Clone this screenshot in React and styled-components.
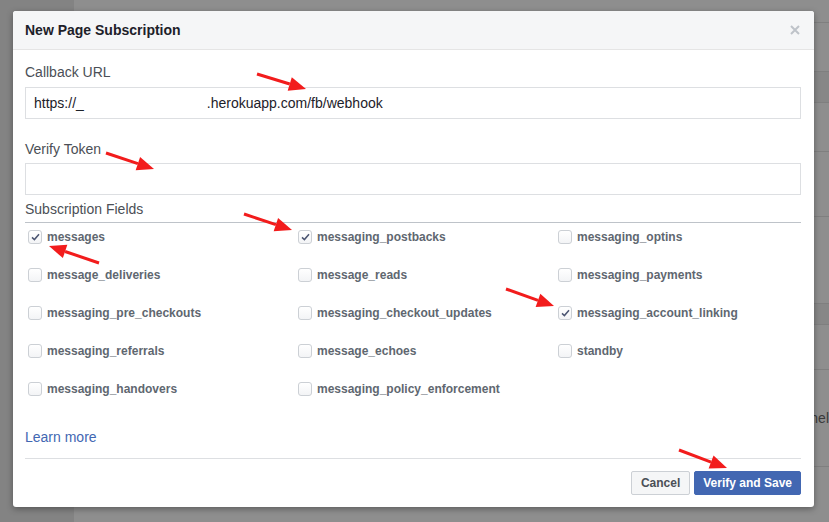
import React from 'react'
import styled, { createGlobalStyle } from 'styled-components'

const GlobalStyle = createGlobalStyle`
  html, body {
    margin: 0;
    padding: 0;
    width: 829px;
    height: 522px;
    overflow: hidden;
    font-family: "Liberation Sans", Arial, Helvetica, sans-serif;
  }
`

const Page = styled.div`
  position: relative;
  width: 829px;
  height: 522px;
  display: flex;
  background: #8e8e8e;
  overflow: hidden;
`

const Sidebar = styled.div`
  width: 74px;
  flex: none;
  background: #838383;
`

const Main = styled.div`
  flex: 1;
  display: flex;
  flex-direction: column;
`

const BgRow = styled.div`
  flex: none;
  height: ${({ h }) => h}px;
  background: ${({ band }) => (band ? '#878787' : 'transparent')};
  border-bottom: 1px solid #7f7f7f;
  display: flex;
  align-items: center;
  justify-content: flex-end;
  font-size: 14px;
  color: #3a3a3a;
  overflow: hidden;
  white-space: nowrap;
`

const Dialog = styled.div`
  position: absolute;
  left: 13px;
  top: 11px;
  width: 801px;
  height: 496px;
  background: #fff;
  border-radius: 3px;
  box-shadow: 0 2px 6px rgba(0, 0, 0, 0.35);
  display: flex;
  flex-direction: column;
  overflow: hidden;
`

const Header = styled.div`
  height: 38px;
  flex: none;
  background: #f5f6f7;
  border-bottom: 1px solid #e5e5e5;
  display: flex;
  align-items: center;
  justify-content: space-between;
  padding: 0 13px 0 12px;
`

const Title = styled.div`
  font-size: 14px;
  font-weight: bold;
  color: #1d2129;
  line-height: 18px;
`

const Close = styled.button`
  border: none;
  background: none;
  padding: 0;
  width: 12px;
  height: 12px;
  display: flex;
  align-items: center;
  justify-content: center;
  cursor: pointer;
`

const Body = styled.div`
  padding: 13px 13px 12px 12px;
  display: flex;
  flex-direction: column;
`

const Label = styled.div`
  font-size: 14px;
  line-height: 18px;
  color: #4b4f56;
  margin-top: ${({ top }) => top || 0}px;
  margin-bottom: ${({ bottom }) => bottom || 0}px;
`

const SectionLabel = styled(Label)`
  padding-bottom: 4px;
  border-bottom: 1px solid #bec3c9;
`

const Input = styled.div`
  height: 30px;
  border: 1px solid #dddfe2;
  display: flex;
  align-items: center;
  padding: 0 8px;
  font-size: 14px;
  color: #1d2129;
  white-space: pre;
`

const Redacted = styled.span`
  display: inline-block;
  width: ${({ w }) => w}px;
`

const Fields = styled.div`
  display: grid;
  grid-template-columns: 270px 260px 1fr;
  row-gap: 18px;
  margin-top: 4px;
`

const Field = styled.label`
  display: flex;
  align-items: center;
  height: 20px;
  padding-left: 3px;
  font-size: 12px;
  font-weight: bold;
  color: #606770;
`

const Box = styled.span`
  width: 12px;
  height: 12px;
  flex: none;
  border: 1px solid #ccd0d5;
  border-radius: 3px;
  background: linear-gradient(#fff, #f3f4f6);
  margin-right: 5px;
  display: flex;
  align-items: center;
  justify-content: center;
`

const LearnMore = styled.a`
  font-size: 14px;
  line-height: 18px;
  color: #4267b2;
  text-decoration: none;
  margin-top: 29px;
  align-self: flex-start;
`

const Footer = styled.div`
  margin-top: 12px;
  border-top: 1px solid #dddfe2;
  padding-top: 12px;
  display: flex;
  justify-content: flex-end;
  gap: 4px;
`

const Button = styled.button`
  height: 24px;
  padding: 0 ${({ primary }) => (primary ? 8 : 9)}px;
  border-radius: 2px;
  font-family: inherit;
  font-size: 12px;
  font-weight: bold;
  border: 1px solid ${({ primary }) => (primary ? '#4267b2' : '#ccd0d5')};
  background: ${({ primary }) => (primary ? '#4267b2' : '#f5f6f7')};
  color: ${({ primary }) => (primary ? '#fff' : '#4b4f56')};
  cursor: pointer;
`

const Annotations = styled.svg`
  position: absolute;
  left: 0;
  top: 0;
  pointer-events: none;
`

const fields = [
  ['messages', true],
  ['messaging_postbacks', true],
  ['messaging_optins', false],
  ['message_deliveries', false],
  ['message_reads', false],
  ['messaging_payments', false],
  ['messaging_pre_checkouts', false],
  ['messaging_checkout_updates', false],
  ['messaging_account_linking', true],
  ['messaging_referrals', false],
  ['message_echoes', false],
  ['standby', false],
  ['messaging_handovers', false],
  ['messaging_policy_enforcement', false],
]

// tail -> tip of each red annotation arrow
const arrows = [
  [257, 74, 306, 89],
  [106, 153, 154, 169],
  [244, 214, 292, 230],
  [99, 263, 49, 246],
  [506, 289, 554, 306],
  [679, 450, 727, 468],
]

const Arrow = ({ x1, y1, x2, y2 }) => {
  const dx = x2 - x1
  const dy = y2 - y1
  const len = Math.hypot(dx, dy)
  const ux = dx / len
  const uy = dy / len
  const hl = 17
  const hw = 7
  const bx = x2 - ux * hl
  const by = y2 - uy * hl
  const pts = `${x2},${y2} ${bx - uy * hw},${by + ux * hw} ${bx + uy * hw},${by - ux * hw}`
  return (
    <g>
      <line x1={x1} y1={y1} x2={bx} y2={by} stroke="#f21c1c" strokeWidth="3" />
      <polygon points={pts} fill="#f21c1c" />
    </g>
  )
}

const Check = () => (
  <svg width="9" height="8" viewBox="0 0 9 8">
    <path d="M1 4.4 L3.4 6.6 L8 1.2" fill="none" stroke="#4b5572" strokeWidth="1.5" />
  </svg>
)

const App = () => (
  <>
    <GlobalStyle />
    <Page>
      <Sidebar />
      <Main>
        <BgRow h={22} />
        <BgRow h={48} />
        <BgRow h={30} band />
        <BgRow h={48} />
        <BgRow h={64} />
        <BgRow h={86} />
        <BgRow h={20} band />
        <BgRow h={44} />
        <BgRow h={96}>hel</BgRow>
      </Main>

      <Dialog>
        <Header>
          <Title>New Page Subscription</Title>
          <Close aria-label="Close">
            <svg width="10" height="10" viewBox="0 0 10 10">
              <path d="M1 1 L9 9 M9 1 L1 9" stroke="#bec3c9" strokeWidth="2" />
            </svg>
          </Close>
        </Header>
        <Body>
          <Label bottom={6}>Callback URL</Label>
          <Input>
            https://_<Redacted w={123} />.herokuapp.com/fb/webhook
          </Input>
          <Label top={21} bottom={5}>Verify Token</Label>
          <Input />
          <SectionLabel top={5}>Subscription Fields</SectionLabel>
          <Fields>
            {fields.map(([name, checked]) => (
              <Field key={name}>
                <Box>{checked && <Check />}</Box>
                {name}
              </Field>
            ))}
          </Fields>
          <LearnMore href="#">Learn more</LearnMore>
          <Footer>
            <Button>Cancel</Button>
            <Button primary>Verify and Save</Button>
          </Footer>
        </Body>
      </Dialog>

      <Annotations width="829" height="522">
        {arrows.map(([x1, y1, x2, y2], i) => (
          <Arrow key={i} x1={x1} y1={y1} x2={x2} y2={y2} />
        ))}
      </Annotations>
    </Page>
  </>
)

export default App
